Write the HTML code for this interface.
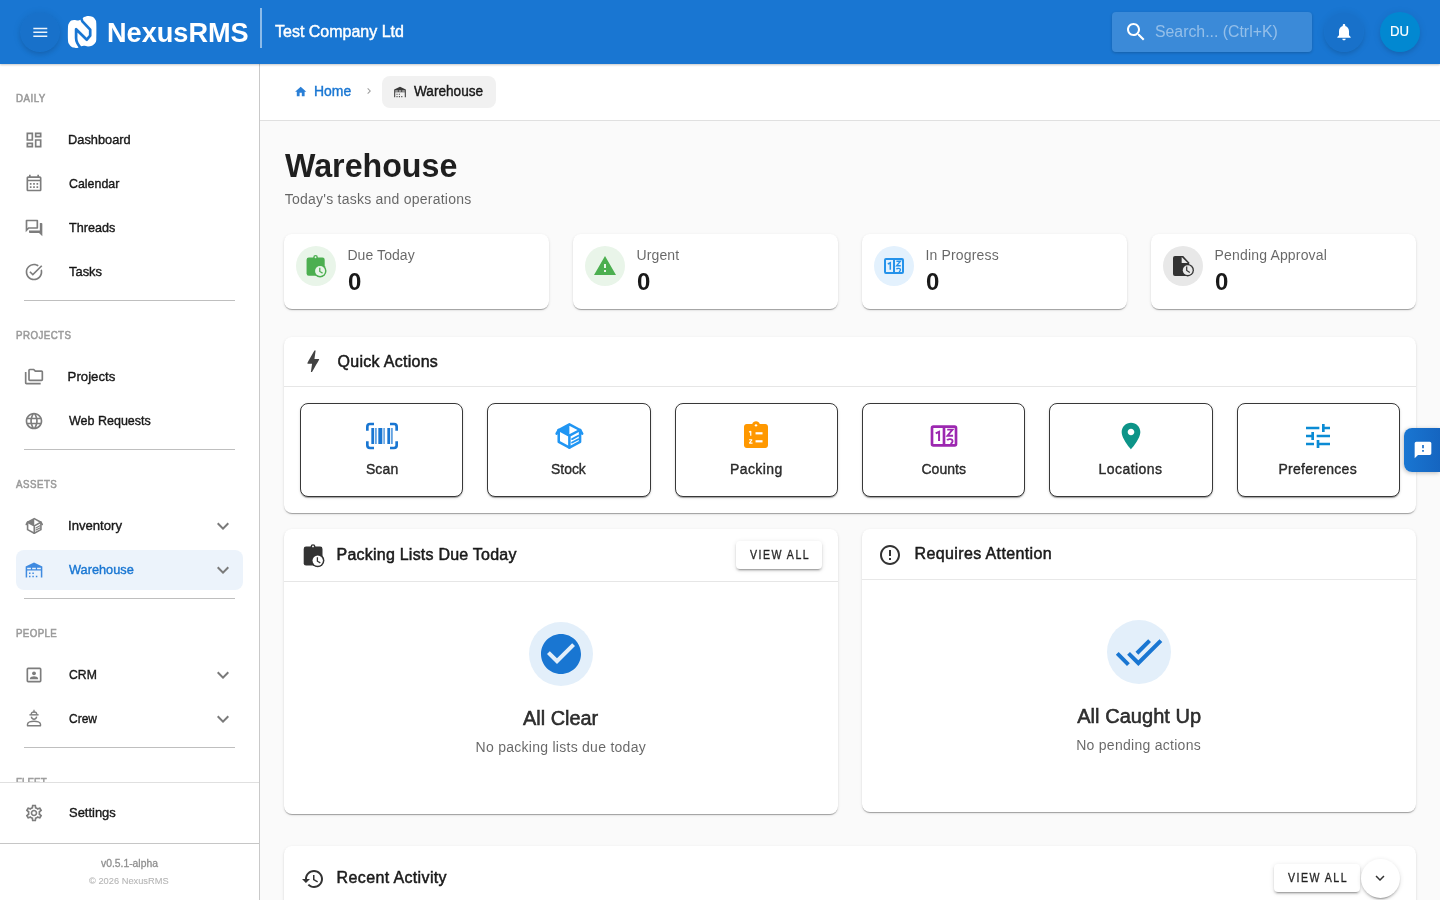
<!DOCTYPE html>
<html lang="en"><head><meta charset="utf-8"><title>Warehouse - NexusRMS</title>
<style>
html,body{margin:0;padding:0;font-family:"Liberation Sans",sans-serif}
body{width:1440px;height:900px;overflow:hidden;position:relative;background:#fafafa;font-family:"Liberation Sans",sans-serif;}
.t{position:absolute;white-space:nowrap;line-height:1;transform-origin:0 0;font-family:"Liberation Sans",sans-serif;}
svg{display:block;overflow:visible}
</style></head><body>
<div id="app" style="position:absolute;left:0;top:0;width:1440px;height:900px;overflow:hidden;will-change:transform;">

<div id="sidebar" style="position:absolute;left:0;top:64px;width:259px;height:836px;background:#fff;border-right:1px solid #c9c9c9;">
</div>
<!-- sidebar nav -->
<div style="position:absolute;left:16px;top:550px;width:227px;height:39.6px;background:#ecf3fb;border-radius:8px;"></div>
<span class="t" style="left:16.40px;top:93px;font-size:10.8px;color:#9a9a9a;letter-spacing:0.533px;transform:scaleX(0.9000);-webkit-text-stroke:0.55px #9a9a9a;">DAILY</span>
<span class="t" style="left:16.40px;top:330px;font-size:10.8px;color:#9a9a9a;letter-spacing:0.500px;transform:scaleX(0.9000);-webkit-text-stroke:0.55px #9a9a9a;">PROJECTS</span>
<span class="t" style="left:16.40px;top:479px;font-size:10.8px;color:#9a9a9a;letter-spacing:0.542px;transform:scaleX(0.9000);-webkit-text-stroke:0.55px #9a9a9a;">ASSETS</span>
<span class="t" style="left:16.40px;top:628px;font-size:10.8px;color:#9a9a9a;letter-spacing:0.421px;transform:scaleX(0.9000);-webkit-text-stroke:0.55px #9a9a9a;">PEOPLE</span>
<div style="position:absolute;left:0;top:770px;width:259px;height:12px;overflow:hidden;">
<span class="t" style="left:16.40px;top:7px;font-size:10.8px;color:#9a9a9a;letter-spacing:0.110px;transform:scaleX(0.9000);-webkit-text-stroke:0.55px #9a9a9a;">FLEET</span>
</div>
<div style="position:absolute;left:24px;top:300px;width:211px;height:1px;background:#bfbfbf;"></div>
<div style="position:absolute;left:24px;top:449px;width:211px;height:1px;background:#bfbfbf;"></div>
<div style="position:absolute;left:24px;top:598px;width:211px;height:1px;background:#bfbfbf;"></div>
<div style="position:absolute;left:24px;top:747px;width:211px;height:1px;background:#bfbfbf;"></div>
<svg style="position:absolute;left:24px;top:129.5px;width:20px;height:20px;fill:#7d7d7d;" viewBox="0 0 24 24"><path d="M19 5v2h-4V5h4M9 5v6H5V5h4m10 8v6h-4v-6h4M9 17v2H5v-2h4M21 3h-8v6h8V3zM11 3H3v10h8V3zm10 8h-8v10h8V11zm-10 4H3v6h8v-6z"/></svg>
<svg style="position:absolute;left:24px;top:172.9px;width:20px;height:20px;fill:#7d7d7d;" viewBox="0 0 24 24"><path d="M19 4h-1V2h-2v2H8V2H6v2H5c-1.11 0-1.99.9-1.99 2L3 20c0 1.1.89 2 2 2h14c1.1 0 2-.9 2-2V6c0-1.1-.9-2-2-2zm0 16H5V10h14v10zm0-12H5V6h14v2zM9 14H7v-2h2v2zm4 0h-2v-2h2v2zm4 0h-2v-2h2v2zm-8 4H7v-2h2v2zm4 0h-2v-2h2v2zm4 0h-2v-2h2v2z"/></svg>
<svg style="position:absolute;left:24px;top:217.6px;width:20px;height:20px;fill:#7d7d7d;" viewBox="0 0 24 24"><path d="M15 4v7H5.17L4 12.17V4h11m1-2H3c-.55 0-1 .45-1 1v14l4-4h10c.55 0 1-.45 1-1V3c0-.55-.45-1-1-1zm5 4h-2v9H6v2c0 .55.45 1 1 1h11l4 4V7c0-.55-.45-1-1-1z"/></svg>
<svg style="position:absolute;left:24px;top:261.6px;width:20px;height:20px;fill:#7d7d7d;" viewBox="0 0 24 24"><path d="M22 5.18 10.59 16.6l-4.24-4.24 1.41-1.41 2.83 2.83 10-10L22 5.18zm-2.21 5.04c.13.57.21 1.17.21 1.78 0 4.42-3.58 8-8 8s-8-3.58-8-8 3.58-8 8-8c1.58 0 3.04.46 4.28 1.25l1.44-1.44C16.1 2.67 14.13 2 12 2 6.48 2 2 6.48 2 12s4.48 10 10 10 10-4.48 10-10c0-1.19-.22-2.33-.6-3.39l-1.61 1.61z"/></svg>
<svg style="position:absolute;left:24px;top:366.5px;width:20px;height:20px;fill:#7d7d7d;" viewBox="0 0 24 24"><path d="M3 19h17v2H3c-1.1 0-2-.9-2-2V6h2v13zM23 6v9c0 1.1-.9 2-2 2H7c-1.1 0-2-.9-2-2l.01-11c0-1.1.89-2 1.99-2h5l2 2h7c1.1 0 2 .9 2 2zM7 15h14V6h-7.83l-2-2H7v11z"/></svg>
<svg style="position:absolute;left:24px;top:410.5px;width:20px;height:20px;fill:#7d7d7d;" viewBox="0 0 24 24"><path d="M11.99 2C6.47 2 2 6.48 2 12s4.47 10 9.99 10C17.52 22 22 17.52 22 12S17.52 2 11.99 2zm6.93 6h-2.95c-.32-1.25-.78-2.45-1.38-3.56 1.84.63 3.37 1.91 4.33 3.56zM12 4.04c.83 1.2 1.48 2.53 1.91 3.96h-3.82c.43-1.43 1.08-2.76 1.91-3.96zM4.26 14C4.1 13.36 4 12.69 4 12s.1-1.36.26-2h3.38c-.08.66-.14 1.32-.14 2 0 .68.06 1.34.14 2H4.26zm.82 2h2.95c.32 1.25.78 2.45 1.38 3.56-1.84-.63-3.37-1.9-4.33-3.56zm2.95-8H5.08c.96-1.66 2.49-2.93 4.33-3.56C8.81 5.55 8.35 6.75 8.03 8zM12 19.96c-.83-1.2-1.48-2.53-1.91-3.96h3.82c-.43 1.43-1.08 2.76-1.91 3.96zM14.34 14H9.66c-.09-.66-.16-1.32-.16-2 0-.68.07-1.35.16-2h4.68c.09.65.16 1.32.16 2 0 .68-.07 1.34-.16 2zm.25 5.56c.6-1.11 1.06-2.31 1.38-3.56h2.95c-.96 1.65-2.49 2.93-4.33 3.56zM16.36 14c.08-.66.14-1.32.14-2 0-.68-.06-1.34-.14-2h3.38c.16.64.26 1.31.26 2s-.1 1.36-.26 2h-3.38z"/></svg>
<svg style="position:absolute;left:24px;top:515.5px;width:20px;height:20px;" viewBox="0 0 24 24"><g fill="none" stroke="#7d7d7d" stroke-width="1.9" stroke-linejoin="round" stroke-linecap="round"><path d="M12.3 3.2 20.3 7.5v8.9l-8 4.3-8-4.3V7.5z"/><path d="M4.3 7.5 12.3 11.8 20.3 7.5M12.3 11.8v8.9"/><path d="M4.3 7.5 2.7 10.2M20.3 7.5 21.9 10.2"/><path d="M14.3 14.3 19 11.8M14.3 16.9 19 14.4" stroke-width="1.4"/></g><path d="M12.3 3.2 4.3 7.5 12.3 11.8z" fill="#7d7d7d"/></svg>
<svg style="position:absolute;left:24px;top:559.5px;width:20px;height:20px;" viewBox="0 0 24 24"><path fill="#3f8ae0" fill-rule="evenodd" d="M12 3 22 7.8V21H20.2V12.6H3.8V21H2V7.8zM3.8 9.3V11H8.3V9.3zM9.8 9.3V11H14.2V9.3zM15.7 9.3V11H20.2V9.3z"/><path fill="#3f8ae0" d="M6 15h1.8v1.8H6zM10 15h1.8v1.8H10zM6 19h1.8v1.8H6zM10 19h1.8v1.8H10zM14.2 19h1.8v1.8H14.2z"/></svg>
<svg style="position:absolute;left:24px;top:664.5px;width:20px;height:20px;" viewBox="0 0 24 24"><path fill="#7d7d7d" fill-rule="evenodd" d="M5 3h14a2 2 0 0 1 2 2v14a2 2 0 0 1-2 2H5a2 2 0 0 1-2-2V5a2 2 0 0 1 2-2zm0 2v14h14V5z"/><circle cx="12" cy="10" r="2.3" fill="#7d7d7d"/><path fill="#7d7d7d" d="M7 17v-.6c0-1.9 3.3-2.9 5-2.9s5 1 5 2.9v.6z"/></svg>
<svg style="position:absolute;left:24px;top:708.4px;width:20px;height:20px;" viewBox="0 0 24 24"><g fill="none" stroke="#7d7d7d" stroke-width="1.7" stroke-linecap="butt"><path d="M6.5 8.2H17.5"/><path d="M8.6 8C8.6 5.6 10 4.6 12 4.6S15.4 5.6 15.4 8" stroke-width="1.5"/><path d="M12 2.2V6" stroke-width="1.5"/><path d="M8.8 10.3C9.2 12.4 10.4 13.4 12 13.4S14.8 12.4 15.2 10.3"/><path d="M4.2 21.2V19.6C4.2 17 8.6 15.8 12 15.8S19.8 17 19.8 19.6V21.2z" stroke-linejoin="round"/></g></svg>
<svg style="position:absolute;left:211px;top:514px;width:24px;height:24px;fill:#7a7a7a;" viewBox="0 0 24 24"><path d="M16.59 8.59 12 13.17 7.41 8.59 6 10l6 6 6-6z"/></svg>
<svg style="position:absolute;left:211px;top:558px;width:24px;height:24px;fill:#7a7a7a;" viewBox="0 0 24 24"><path d="M16.59 8.59 12 13.17 7.41 8.59 6 10l6 6 6-6z"/></svg>
<svg style="position:absolute;left:211px;top:663px;width:24px;height:24px;fill:#7a7a7a;" viewBox="0 0 24 24"><path d="M16.59 8.59 12 13.17 7.41 8.59 6 10l6 6 6-6z"/></svg>
<svg style="position:absolute;left:211px;top:707px;width:24px;height:24px;fill:#7a7a7a;" viewBox="0 0 24 24"><path d="M16.59 8.59 12 13.17 7.41 8.59 6 10l6 6 6-6z"/></svg>
<span class="t" style="left:67.63px;top:133px;font-size:13.2px;color:rgba(0,0,0,0.87);transform:scaleX(0.9718);-webkit-text-stroke:0.4px rgba(0,0,0,0.87);">Dashboard</span>
<span class="t" style="left:68.60px;top:177px;font-size:13.2px;color:rgba(0,0,0,0.87);transform:scaleX(0.9404);-webkit-text-stroke:0.4px rgba(0,0,0,0.87);">Calendar</span>
<span class="t" style="left:68.60px;top:221px;font-size:13.2px;color:rgba(0,0,0,0.87);transform:scaleX(0.9563);-webkit-text-stroke:0.4px rgba(0,0,0,0.87);">Threads</span>
<span class="t" style="left:68.60px;top:265px;font-size:13.2px;color:rgba(0,0,0,0.87);transform:scaleX(0.9791);-webkit-text-stroke:0.4px rgba(0,0,0,0.87);">Tasks</span>
<span class="t" style="left:67.60px;top:370px;font-size:13.2px;color:rgba(0,0,0,0.87);letter-spacing:0.015px;-webkit-text-stroke:0.4px rgba(0,0,0,0.87);">Projects</span>
<span class="t" style="left:68.60px;top:414px;font-size:13.2px;color:rgba(0,0,0,0.87);transform:scaleX(0.9480);-webkit-text-stroke:0.4px rgba(0,0,0,0.87);">Web Requests</span>
<span class="t" style="left:67.60px;top:519px;font-size:13.2px;color:rgba(0,0,0,0.87);transform:scaleX(0.9953);-webkit-text-stroke:0.4px rgba(0,0,0,0.87);">Inventory</span>
<span class="t" style="left:68.60px;top:563px;font-size:13.2px;color:#1976d2;transform:scaleX(0.9668);-webkit-text-stroke:0.4px #1976d2;">Warehouse</span>
<span class="t" style="left:68.60px;top:668px;font-size:13.2px;color:rgba(0,0,0,0.87);transform:scaleX(0.9261);-webkit-text-stroke:0.4px rgba(0,0,0,0.87);">CRM</span>
<span class="t" style="left:68.60px;top:712px;font-size:13.2px;color:rgba(0,0,0,0.87);transform:scaleX(0.9088);-webkit-text-stroke:0.4px rgba(0,0,0,0.87);">Crew</span>
<div style="position:absolute;left:0px;top:782px;width:259px;height:61px;background:#fff;border-top:1px solid #e0e0e0;box-sizing:border-box;"></div>
<svg style="position:absolute;left:24px;top:802.9px;width:20px;height:20px;fill:#7d7d7d;" viewBox="0 0 24 24"><path d="M19.43 12.98c.04-.32.07-.64.07-.98 0-.34-.03-.66-.07-.98l2.11-1.65c.19-.15.24-.42.12-.64l-2-3.46c-.09-.16-.26-.25-.44-.25-.06 0-.12.01-.17.03l-2.49 1c-.52-.4-1.08-.73-1.69-.98l-.38-2.65C14.46 2.18 14.25 2 14 2h-4c-.25 0-.46.18-.49.42l-.38 2.65c-.61.25-1.17.59-1.69.98l-2.49-1c-.06-.02-.12-.03-.18-.03-.17 0-.34.09-.43.25l-2 3.46c-.13.22-.07.49.12.64l2.11 1.65c-.04.32-.07.65-.07.98 0 .33.03.66.07.98l-2.11 1.65c-.19.15-.24.42-.12.64l2 3.46c.09.16.26.25.44.25.06 0 .12-.01.17-.03l2.49-1c.52.4 1.08.73 1.69.98l.38 2.65c.03.24.24.42.49.42h4c.25 0 .46-.18.49-.42l.38-2.65c.61-.25 1.17-.59 1.69-.98l2.49 1c.06.02.12.03.18.03.17 0 .34-.09.43-.25l2-3.46c.12-.22.07-.49-.12-.64l-2.11-1.65zm-1.98-1.71c.04.31.05.52.05.73 0 .21-.02.43-.05.73l-.14 1.13.89.7 1.08.84-.7 1.21-1.27-.51-1.04-.42-.9.68c-.43.32-.84.56-1.25.73l-1.06.43-.16 1.13-.2 1.35h-1.4l-.19-1.35-.16-1.13-1.06-.43c-.43-.18-.83-.41-1.23-.71l-.91-.7-1.06.43-1.27.51-.7-1.21 1.08-.84.89-.7-.14-1.13c-.03-.31-.05-.54-.05-.74s.02-.43.05-.73l.14-1.13-.89-.7-1.08-.84.7-1.21 1.27.51 1.04.42.9-.68c.43-.32.84-.56 1.25-.73l1.06-.43.16-1.13.2-1.35h1.39l.19 1.35.16 1.13 1.06.43c.43.18.83.41 1.23.71l.91.7 1.06-.43 1.27-.51.7 1.21-1.07.85-.89.7.14 1.13zM12 8c-2.21 0-4 1.79-4 4s1.79 4 4 4 4-1.79 4-4-1.79-4-4-4zm0 6c-1.1 0-2-.9-2-2s.9-2 2-2 2 .9 2 2-.9 2-2 2z"/></svg>
<span class="t" style="left:68.60px;top:806px;font-size:13.2px;color:rgba(0,0,0,0.87);transform:scaleX(0.9811);-webkit-text-stroke:0.4px rgba(0,0,0,0.87);">Settings</span>
<div style="position:absolute;left:0px;top:843px;width:259px;height:57px;background:#fff;border-top:1px solid #c6c6c6;box-sizing:border-box;"></div>
<span class="t" style="left:100.90px;top:859px;font-size:10.4px;color:#8f8f8f;transform:scaleX(0.9946);-webkit-text-stroke:0.3px #8f8f8f;">v0.5.1-alpha</span>
<span class="t" style="left:89.40px;top:876px;font-size:9.8px;color:#b5b5b5;transform:scaleX(0.9484);-webkit-text-stroke:0.1px #b5b5b5;">© 2026 NexusRMS</span>
<div style="position:absolute;left:260px;top:64px;width:1180px;height:56px;background:#fff;border-bottom:1px solid #e0e0e0;"></div>
<svg style="position:absolute;left:294.0px;top:85px;width:13.4px;height:13.4px;fill:#2a7fd6;" viewBox="0 0 24 24"><path d="M10 20v-6h4v6h5v-8h3L12 3 2 12h3v8z"/></svg>
<span class="t" style="left:313.60px;top:84px;font-size:14px;color:#1976d2;transform:scaleX(0.9957);-webkit-text-stroke:0.4px #1976d2;">Home</span>
<svg style="position:absolute;left:363.2px;top:85.2px;width:12px;height:12px;fill:#9e9e9e;" viewBox="0 0 24 24"><path d="M10 6 8.59 7.41 13.17 12l-4.58 4.59L10 18l6-6z"/></svg>
<div style="position:absolute;left:382px;top:76px;width:114px;height:32px;background:#f1f1f1;border-radius:8px;"></div>
<svg style="position:absolute;left:393.4px;top:84.8px;width:14px;height:14px;" viewBox="0 0 24 24"><path fill="#3a3a3a" fill-rule="evenodd" d="M12 3 22 7.8V21H20.2V12.6H3.8V21H2V7.8zM3.8 9.3V11H8.3V9.3zM9.8 9.3V11H14.2V9.3zM15.7 9.3V11H20.2V9.3z"/><path fill="#3a3a3a" d="M6 15h1.8v1.8H6zM10 15h1.8v1.8H10zM6 19h1.8v1.8H6zM10 19h1.8v1.8H10zM14.2 19h1.8v1.8H14.2z"/></svg>
<span class="t" style="left:285.20px;top:148px;font-size:34px;color:rgba(0,0,0,0.88);transform:scaleX(0.9470);font-weight:700;">Warehouse</span>
<div style="position:absolute;left:0;top:0;width:1440px;height:64px;background:#1976d2;box-shadow:0 1px 2px rgba(0,0,0,.22);"></div>
<div style="position:absolute;left:20px;top:12px;width:40px;height:40px;border-radius:50%;background:rgba(0,0,0,0.035);box-shadow:0 3px 5px -1px rgba(0,0,0,.12),0 1px 8px 0 rgba(0,0,0,.08);"></div>
<svg style="position:absolute;left:30.7px;top:22.7px;width:18.6px;height:18.6px;fill:rgba(255,255,255,0.92);" viewBox="0 0 24 24"><path d="M3 18h18v-2H3v2zm0-5h18v-2H3v2zm0-7v2h18V6H3z"/></svg>
<svg style="position:absolute;left:68px;top:16px;width:28.3px;height:32px" viewBox="0 0 28.3 32"><path d="M6.10 3.90C7.28 3.87 9.15 4.55 10.40 4.40C11.65 4.25 12.65 3.55 13.60 3.00C14.55 2.45 15.03 1.60 16.10 1.10C17.17 0.60 18.62 0.05 20.00 0.00C21.38 -0.05 23.15 0.15 24.40 0.80C25.65 1.45 26.85 2.78 27.50 3.90C28.15 5.02 28.17 4.30 28.30 7.50C28.43 10.70 28.48 19.87 28.30 23.10C28.12 26.33 27.93 25.80 27.20 26.90C26.47 28.00 25.10 29.12 23.90 29.70C22.70 30.28 21.38 30.40 20.00 30.40C18.62 30.40 16.98 29.63 15.60 29.70C14.22 29.77 12.63 30.47 11.70 30.80C10.77 31.13 10.65 31.50 10.00 31.70C9.35 31.90 8.82 32.10 7.80 32.00C6.78 31.90 5.02 31.77 3.90 31.10C2.78 30.43 1.75 29.15 1.10 28.00C0.45 26.85 0.18 27.07 0.00 24.20C-0.18 21.33 -0.18 13.68 0.00 10.80C0.18 7.92 0.55 7.93 1.10 6.90C1.65 5.87 2.47 5.10 3.30 4.60C4.13 4.10 4.92 3.93 6.10 3.90Z" fill="#fff"/><path d="M13.0 1.8 14.4 5.3 22.2 13.7V19.6L18.8 23.7 8.1 13.2V21.9C8.1 24 8.6 25.6 9.3 27 10 28.5 11 29.8 12.4 31.6" fill="none" stroke="#1976d2" stroke-width="2.7" stroke-linejoin="round" stroke-linecap="butt"/></svg>
<span class="t" style="left:107.23px;top:19px;font-size:28px;color:#fff;transform:scaleX(0.9683);font-weight:700;">NexusRMS</span>
<div style="position:absolute;left:260px;top:8px;width:2px;height:40px;background:rgba(255,255,255,0.5);"></div>
<span class="t" style="left:274.60px;top:23px;font-size:16.4px;color:#fff;transform:scaleX(0.9759);-webkit-text-stroke:0.45px #fff;">Test Company Ltd</span>
<div style="position:absolute;left:1112px;top:12px;width:200px;height:40px;background:rgba(255,255,255,0.15);border-radius:4px;box-shadow:0 1px 3px rgba(0,0,0,.2);"></div>
<svg style="position:absolute;left:1124px;top:20px;width:24px;height:24px;fill:#fff;" viewBox="0 0 24 24"><path d="M15.5 14h-.79l-.28-.27C15.41 12.59 16 11.11 16 9.5 16 5.91 13.09 3 9.5 3S3 5.91 3 9.5 5.91 16 9.5 16c1.61 0 3.09-.59 4.23-1.57l.27.28v.79l5 4.99L20.49 19l-4.99-5zm-6 0C7.01 14 5 11.99 5 9.5S7.01 5 9.5 5 14 7.01 14 9.5 11.99 14 9.5 14z"/></svg>
<span class="t" style="left:1154.60px;top:24px;font-size:16px;color:rgba(255,255,255,0.45);transform:scaleX(0.9895);">Search... (Ctrl+K)</span>
<div style="position:absolute;left:1324px;top:12px;width:40px;height:40px;border-radius:50%;background:rgba(0,0,0,0.035);box-shadow:0 3px 5px -1px rgba(0,0,0,.12),0 1px 8px 0 rgba(0,0,0,.08);"></div>
<svg style="position:absolute;left:1334px;top:22px;width:20px;height:20px;fill:#fff;" viewBox="0 0 24 24"><path d="M12 22c1.1 0 2-.9 2-2h-4c0 1.1.89 2 2 2zm6-6v-5c0-3.07-1.64-5.64-4.5-6.32V4c0-.83-.67-1.5-1.5-1.5s-1.5.67-1.5 1.5v.68C7.63 5.36 6 7.92 6 11v5l-2 2v1h16v-1l-2-2z"/></svg>
<div style="position:absolute;left:1380px;top:12px;width:40px;height:40px;border-radius:50%;background:#0288d1;box-shadow:0 3px 5px -1px rgba(0,0,0,.12),0 1px 8px 0 rgba(0,0,0,.08);"></div>
<span class="t" style="left:1390.26px;top:24px;font-size:14px;color:#fff;transform:scaleX(0.9419);-webkit-text-stroke:0.2px #fff;">DU</span>
<span class="t" style="left:413.90px;top:84px;font-size:14px;color:rgba(0,0,0,0.87);transform:scaleX(0.9721);-webkit-text-stroke:0.4px rgba(0,0,0,0.87);">Warehouse</span>
<span class="t" style="left:284.70px;top:192px;font-size:14px;color:rgba(0,0,0,0.6);letter-spacing:0.237px;">Today&#x27;s tasks and operations</span>
<div style="position:absolute;left:284px;top:234px;width:265px;height:75px;background:#fff;border-radius:8px;box-shadow:0 2px 1px -1px rgba(0,0,0,.2),0 1px 1px 0 rgba(0,0,0,.14),0 1px 3px 0 rgba(0,0,0,.12);"></div>
<div style="position:absolute;left:296px;top:246px;width:40px;height:40px;border-radius:50%;background:#e9f5e9;"></div>
<svg style="position:absolute;left:303.2px;top:252.6px;width:27px;height:27px;" viewBox="0 0 28 28"><rect x="3.7" y="4.6" width="18.8" height="18.9" rx="2.3" fill="#4caf50"/><circle cx="13" cy="4.6" r="2.4" fill="#4caf50"/><circle cx="13" cy="4.4" r="0.95" fill="#e9f5e9"/><circle cx="17.7" cy="18.6" r="6.7" fill="#4caf50"/><circle cx="17.7" cy="18.6" r="5.2" fill="#e9f5e9"/><path d="M17.4 15.2V19.2L20.3 20.9" fill="none" stroke="#4caf50" stroke-width="1.3"/></svg>
<span class="t" style="left:347.40px;top:248px;font-size:14px;color:rgba(0,0,0,0.6);letter-spacing:0.084px;">Due Today</span>
<span class="t" style="left:347.90px;top:270px;font-size:24px;color:rgba(0,0,0,0.9);font-weight:700;">0</span>
<div style="position:absolute;left:573px;top:234px;width:265px;height:75px;background:#fff;border-radius:8px;box-shadow:0 2px 1px -1px rgba(0,0,0,.2),0 1px 1px 0 rgba(0,0,0,.14),0 1px 3px 0 rgba(0,0,0,.12);"></div>
<div style="position:absolute;left:585px;top:246px;width:40px;height:40px;border-radius:50%;background:#e9f5e9;"></div>
<svg style="position:absolute;left:593px;top:254px;width:24px;height:24px;fill:#4caf50;" viewBox="0 0 24 24"><path d="M1 21h22L12 2 1 21zm12-3h-2v-2h2v2zm0-4h-2v-4h2v4z"/></svg>
<span class="t" style="left:636.60px;top:248px;font-size:14px;color:rgba(0,0,0,0.6);letter-spacing:0.094px;">Urgent</span>
<span class="t" style="left:637.00px;top:270px;font-size:24px;color:rgba(0,0,0,0.9);font-weight:700;">0</span>
<div style="position:absolute;left:862px;top:234px;width:265px;height:75px;background:#fff;border-radius:8px;box-shadow:0 2px 1px -1px rgba(0,0,0,.2),0 1px 1px 0 rgba(0,0,0,.14),0 1px 3px 0 rgba(0,0,0,.12);"></div>
<div style="position:absolute;left:874px;top:246px;width:40px;height:40px;border-radius:50%;background:#e3f1fd;"></div>
<svg style="position:absolute;left:882px;top:254px;width:24px;height:24px;" viewBox="0 0 24 24"><path fill="#2492ea" fill-rule="evenodd" d="M4 4h16a2 2 0 0 1 2 2v12a2 2 0 0 1-2 2H4a2 2 0 0 1-2-2V6a2 2 0 0 1 2-2zm0 2v12h7V6zm9 0v12h7V6z"/><g fill="none" stroke="#2492ea" stroke-width="1.5" stroke-linejoin="miter"><path d="M5.8 10 8.3 8.8V15.8"/><path d="M14.4 7.2H18.4L14.6 11.8H18.8" stroke-width="1.4"/><path d="M14.4 15.2C15 14 18.6 13.9 18.4 16 18.3 17 17.6 17.4 17 18" stroke-width="1.4"/></g></svg>
<span class="t" style="left:925.40px;top:248px;font-size:14px;color:rgba(0,0,0,0.6);letter-spacing:0.171px;">In Progress</span>
<span class="t" style="left:926.00px;top:270px;font-size:24px;color:rgba(0,0,0,0.9);font-weight:700;">0</span>
<div style="position:absolute;left:1151px;top:234px;width:265px;height:75px;background:#fff;border-radius:8px;box-shadow:0 2px 1px -1px rgba(0,0,0,.2),0 1px 1px 0 rgba(0,0,0,.14),0 1px 3px 0 rgba(0,0,0,.12);"></div>
<div style="position:absolute;left:1163px;top:246px;width:40px;height:40px;border-radius:50%;background:#e8e8e8;"></div>
<svg style="position:absolute;left:1171px;top:254px;width:24px;height:24px;" viewBox="0 0 24 24"><path fill="#333" d="M4 2h8.2L18.2 8.4V20a2 2 0 0 1-2 2H4a2 2 0 0 1-2-2V4a2 2 0 0 1 2-2z"/><path fill="#e8e8e8" d="M10.7 3.1V9.1H16.7z"/><circle cx="16.7" cy="16.2" r="6.2" fill="#333"/><circle cx="16.7" cy="16.2" r="4.9" fill="#e8e8e8"/><path d="M15.7 12.4V16.5L18.8 18.4" fill="none" stroke="#333" stroke-width="1.2"/></svg>
<span class="t" style="left:1214.60px;top:248px;font-size:14px;color:rgba(0,0,0,0.6);letter-spacing:0.166px;">Pending Approval</span>
<span class="t" style="left:1214.90px;top:270px;font-size:24px;color:rgba(0,0,0,0.9);font-weight:700;">0</span>
<div style="position:absolute;left:284px;top:337px;width:1132px;height:176px;background:#fff;border-radius:8px;box-shadow:0 2px 1px -1px rgba(0,0,0,.2),0 1px 1px 0 rgba(0,0,0,.14),0 1px 3px 0 rgba(0,0,0,.12);"></div>
<div style="position:absolute;left:284px;top:386px;width:1132px;height:1px;background:#e6e6e6;"></div>
<svg style="position:absolute;left:298.5px;top:347.4px;width:28.5px;height:28.5px;fill:#424242;" viewBox="0 0 24 24"><path d="M11 21h-1l1-7H7.5c-.58 0-.57-.32-.38-.66.19-.34.05-.08.07-.12C8.48 10.94 10.42 7.54 13 3h1l-1 7h3.5c.49 0 .56.33.47.51l-.07.15C12.96 17.55 11 21 11 21z"/></svg>
<span class="t" style="left:337.60px;top:354px;font-size:16px;color:rgba(0,0,0,0.87);letter-spacing:0.274px;-webkit-text-stroke:0.5px rgba(0,0,0,0.87);">Quick Actions</span>
<div style="position:absolute;left:300.0px;top:403px;width:163.33px;height:94px;box-sizing:border-box;border:1px solid #383838;border-radius:8px;background:#fff;box-shadow:0 2px 1px -1px rgba(0,0,0,.2),0 1px 1px 0 rgba(0,0,0,.14),0 1px 3px 0 rgba(0,0,0,.12);"></div>
<svg style="position:absolute;left:365.67px;top:420px;width:32px;height:32px;" viewBox="0 0 24 24"><g fill="none" stroke="#1976d2" stroke-width="2" stroke-linejoin="round" stroke-linecap="butt"><path d="M1 8V5Q1 3 3 3H6M18 3H21Q23 3 23 5V8M23 16V19Q23 21 21 21H18M6 21H3Q1 21 1 19V16"/></g><g fill="#1976d2"><rect x="4" y="6" width="2.1" height="12"/><rect x="7" y="6" width="0.9" height="12"/><rect x="9.25" y="6" width="3" height="12"/><rect x="13.15" y="6" width="0.8" height="12"/><rect x="16" y="6" width="2.1" height="12"/><rect x="19" y="6" width="0.9" height="12"/></g></svg>
<span class="t" style="left:365.90px;top:462px;font-size:14px;color:rgba(0,0,0,0.8);letter-spacing:0.125px;-webkit-text-stroke:0.4px rgba(0,0,0,0.8);">Scan</span>
<div style="position:absolute;left:487.33px;top:403px;width:163.33px;height:94px;box-sizing:border-box;border:1px solid #383838;border-radius:8px;background:#fff;box-shadow:0 2px 1px -1px rgba(0,0,0,.2),0 1px 1px 0 rgba(0,0,0,.14),0 1px 3px 0 rgba(0,0,0,.12);"></div>
<svg style="position:absolute;left:553.0px;top:420px;width:32px;height:32px;" viewBox="0 0 24 24"><g fill="none" stroke="#2196f3" stroke-width="1.9" stroke-linejoin="round" stroke-linecap="round"><path d="M12.3 3.2 20.3 7.5v8.9l-8 4.3-8-4.3V7.5z"/><path d="M4.3 7.5 12.3 11.8 20.3 7.5M12.3 11.8v8.9"/><path d="M4.3 7.5 2.7 10.2M20.3 7.5 21.9 10.2"/><path d="M14.3 14.3 19 11.8M14.3 16.9 19 14.4" stroke-width="1.4"/></g><path d="M12.3 3.2 4.3 7.5 12.3 11.8z" fill="#2196f3"/></svg>
<span class="t" style="left:550.90px;top:462px;font-size:14px;color:rgba(0,0,0,0.8);transform:scaleX(0.9941);-webkit-text-stroke:0.4px rgba(0,0,0,0.8);">Stock</span>
<div style="position:absolute;left:674.67px;top:403px;width:163.33px;height:94px;box-sizing:border-box;border:1px solid #383838;border-radius:8px;background:#fff;box-shadow:0 2px 1px -1px rgba(0,0,0,.2),0 1px 1px 0 rgba(0,0,0,.14),0 1px 3px 0 rgba(0,0,0,.12);"></div>
<svg style="position:absolute;left:740.33px;top:420px;width:32px;height:32px;" viewBox="0 0 24 24"><path fill="#ff9800" d="M19 3h-4.18C14.4 1.84 13.3 1 12 1s-2.4.84-2.82 2H5c-1.1 0-2 .9-2 2v14c0 1.1.9 2 2 2h14c1.1 0 2-.9 2-2V5c0-1.1-.9-2-2-2z"/><circle cx="12" cy="4" r="0.9" fill="#fff"/><rect x="11.65" y="9.15" width="5.25" height="1.65" fill="#fff"/><rect x="11.65" y="15.15" width="5.25" height="1.65" fill="#fff"/><path d="M6.8 9.1 8.05 8.4V11.85" fill="none" stroke="#fff" stroke-width="0.95" stroke-linejoin="bevel"/><path d="M6.8 14.8H9L7 17.3H9.4" fill="none" stroke="#fff" stroke-width="0.85" stroke-linejoin="bevel"/></svg>
<span class="t" style="left:729.90px;top:462px;font-size:14px;color:rgba(0,0,0,0.8);letter-spacing:0.447px;-webkit-text-stroke:0.4px rgba(0,0,0,0.8);">Packing</span>
<div style="position:absolute;left:862.0px;top:403px;width:163.33px;height:94px;box-sizing:border-box;border:1px solid #383838;border-radius:8px;background:#fff;box-shadow:0 2px 1px -1px rgba(0,0,0,.2),0 1px 1px 0 rgba(0,0,0,.14),0 1px 3px 0 rgba(0,0,0,.12);"></div>
<svg style="position:absolute;left:927.66px;top:420px;width:32px;height:32px;" viewBox="0 0 24 24"><path fill="#9c27b0" fill-rule="evenodd" d="M4 4h16a2 2 0 0 1 2 2v12a2 2 0 0 1-2 2H4a2 2 0 0 1-2-2V6a2 2 0 0 1 2-2zm0 2v12h7V6zm9 0v12h7V6z"/><g fill="none" stroke="#9c27b0" stroke-width="1.5" stroke-linejoin="miter"><path d="M5.8 10 8.3 8.8V15.8"/><path d="M14.4 7.2H18.4L14.6 11.8H18.8" stroke-width="1.4"/><path d="M14.4 15.2C15 14 18.6 13.9 18.4 16 18.3 17 17.6 17.4 17 18" stroke-width="1.4"/></g></svg>
<span class="t" style="left:921.40px;top:462px;font-size:14px;color:rgba(0,0,0,0.8);letter-spacing:0.048px;-webkit-text-stroke:0.4px rgba(0,0,0,0.8);">Counts</span>
<div style="position:absolute;left:1049.33px;top:403px;width:163.33px;height:94px;box-sizing:border-box;border:1px solid #383838;border-radius:8px;background:#fff;box-shadow:0 2px 1px -1px rgba(0,0,0,.2),0 1px 1px 0 rgba(0,0,0,.14),0 1px 3px 0 rgba(0,0,0,.12);"></div>
<svg style="position:absolute;left:1115.0px;top:420px;width:32px;height:32px;fill:#0d9488;" viewBox="0 0 24 24"><path d="M12 2C8.13 2 5 5.13 5 9c0 5.25 7 13 7 13s7-7.75 7-13c0-3.87-3.13-7-7-7zm0 9.5c-1.38 0-2.5-1.12-2.5-2.5s1.12-2.5 2.5-2.5 2.5 1.12 2.5 2.5-1.12 2.5-2.5 2.5z"/></svg>
<span class="t" style="left:1098.60px;top:462px;font-size:14px;color:rgba(0,0,0,0.8);letter-spacing:0.434px;-webkit-text-stroke:0.4px rgba(0,0,0,0.8);">Locations</span>
<div style="position:absolute;left:1236.66px;top:403px;width:163.33px;height:94px;box-sizing:border-box;border:1px solid #383838;border-radius:8px;background:#fff;box-shadow:0 2px 1px -1px rgba(0,0,0,.2),0 1px 1px 0 rgba(0,0,0,.14),0 1px 3px 0 rgba(0,0,0,.12);"></div>
<svg style="position:absolute;left:1302.33px;top:420px;width:32px;height:32px;fill:#0b8bd4;" viewBox="0 0 24 24"><path d="M3 17v2h6v-2H3zM3 5v2h10V5H3zm10 16v-2h8v-2h-8v-2h-2v6h2zM7 9v2H3v2h4v2h2V9H7zm14 4v-2H11v2h10zm-6-4h2V7h4V5h-4V3h-2v6z"/></svg>
<span class="t" style="left:1278.40px;top:462px;font-size:14px;color:rgba(0,0,0,0.8);letter-spacing:0.282px;-webkit-text-stroke:0.4px rgba(0,0,0,0.8);">Preferences</span>
<div style="position:absolute;left:1404px;top:428px;width:36px;height:44px;background:linear-gradient(90deg,#1976d2,#1565c0);border-radius:8px 0 0 8px;box-shadow:-1px 1px 4px rgba(0,0,0,.25);"></div>
<svg style="position:absolute;left:1412.5px;top:440px;width:20px;height:20px;fill:#fff;" viewBox="0 0 24 24"><path d="M20 2H4c-1.1 0-1.99.9-1.99 2L2 22l4-4h14c1.1 0 2-.9 2-2V4c0-1.1-.9-2-2-2zm-7 12h-2v-2h2v2zm0-4h-2V6h2v4z"/></svg>
<div style="position:absolute;left:284px;top:529px;width:554px;height:285px;background:#fff;border-radius:8px;box-shadow:0 2px 1px -1px rgba(0,0,0,.2),0 1px 1px 0 rgba(0,0,0,.14),0 1px 3px 0 rgba(0,0,0,.12);"></div>
<div style="position:absolute;left:284px;top:581px;width:554px;height:1px;background:#e6e6e6;"></div>
<svg style="position:absolute;left:299.5px;top:541.5px;width:28px;height:28px;" viewBox="0 0 28 28"><rect x="3.7" y="4.6" width="18.8" height="18.9" rx="2.3" fill="#333"/><circle cx="13" cy="4.6" r="2.4" fill="#333"/><circle cx="13" cy="4.4" r="0.95" fill="#fff"/><circle cx="17.7" cy="18.6" r="6.7" fill="#333"/><circle cx="17.7" cy="18.6" r="5.2" fill="#fff"/><path d="M17.4 15.2V19.2L20.3 20.9" fill="none" stroke="#333" stroke-width="1.3"/></svg>
<span class="t" style="left:336.60px;top:547px;font-size:16px;color:rgba(0,0,0,0.87);letter-spacing:0.223px;-webkit-text-stroke:0.5px rgba(0,0,0,0.87);">Packing Lists Due Today</span>
<div style="position:absolute;left:736px;top:541px;width:86px;height:28px;background:#fff;border-radius:4px;box-shadow:0 3px 1px -2px rgba(0,0,0,.2),0 2px 2px 0 rgba(0,0,0,.14),0 1px 5px 0 rgba(0,0,0,.12);"></div>
<span class="t" style="left:749.50px;top:549px;font-size:12px;color:rgba(0,0,0,0.8);letter-spacing:1.705px;transform:scaleX(0.8800);-webkit-text-stroke:0.35px rgba(0,0,0,0.8);">VIEW ALL</span>
<div style="position:absolute;left:529px;top:622px;width:64px;height:64px;border-radius:50%;background:#e3effa;"></div>
<svg style="position:absolute;left:537px;top:630px;width:48px;height:48px;fill:#1976d2;" viewBox="0 0 24 24"><path d="M12 2C6.48 2 2 6.48 2 12s4.48 10 10 10 10-4.48 10-10S17.52 2 12 2zm-2 15-5-5 1.41-1.41L10 14.17l7.59-7.59L19 8l-9 9z"/></svg>
<span class="t" style="left:523.20px;top:708px;font-size:20px;color:rgba(0,0,0,0.8);transform:scaleX(0.9945);-webkit-text-stroke:0.55px rgba(0,0,0,0.8);">All Clear</span>
<span class="t" style="left:475.60px;top:740px;font-size:14px;color:rgba(0,0,0,0.6);letter-spacing:0.267px;">No packing lists due today</span>
<div style="position:absolute;left:862px;top:529px;width:554px;height:283px;background:#fff;border-radius:8px;box-shadow:0 2px 1px -1px rgba(0,0,0,.2),0 1px 1px 0 rgba(0,0,0,.14),0 1px 3px 0 rgba(0,0,0,.12);"></div>
<div style="position:absolute;left:862px;top:579px;width:554px;height:1px;background:#e8e8e8;"></div>
<svg style="position:absolute;left:878.4px;top:542.6px;width:24px;height:24px;fill:#333;" viewBox="0 0 24 24"><path d="M11 15h2v2h-2zm0-8h2v6h-2zm.99-5C6.47 2 2 6.48 2 12s4.47 10 9.99 10C17.52 22 22 17.52 22 12S17.52 2 11.99 2zM12 20c-4.42 0-8-3.58-8-8s3.58-8 8-8 8 3.58 8 8-3.58 8-8 8z"/></svg>
<span class="t" style="left:914.60px;top:546px;font-size:16px;color:rgba(0,0,0,0.87);letter-spacing:0.374px;-webkit-text-stroke:0.5px rgba(0,0,0,0.87);">Requires Attention</span>
<div style="position:absolute;left:1107px;top:620px;width:64px;height:64px;border-radius:50%;background:#e3effa;"></div>
<svg style="position:absolute;left:1115.2px;top:628.2px;width:48px;height:48px;fill:#1976d2;" viewBox="0 0 24 24"><path d="m18 7-1.41-1.41-6.34 6.34 1.41 1.41L18 7zm4.24-1.41L11.66 16.17 7.48 12l-1.41 1.41L11.66 19l12-12-1.42-1.41zM.41 13.41 6 19l1.41-1.41L1.83 12 .41 13.41z"/></svg>
<span class="t" style="left:1077.20px;top:706px;font-size:20px;color:rgba(0,0,0,0.8);letter-spacing:0.044px;-webkit-text-stroke:0.55px rgba(0,0,0,0.8);">All Caught Up</span>
<span class="t" style="left:1076.20px;top:738px;font-size:14px;color:rgba(0,0,0,0.6);letter-spacing:0.273px;">No pending actions</span>
<div style="position:absolute;left:284px;top:846px;width:1132px;height:80px;background:#fff;border-radius:8px;box-shadow:0 2px 1px -1px rgba(0,0,0,.2),0 1px 1px 0 rgba(0,0,0,.14),0 1px 3px 0 rgba(0,0,0,.12);"></div>
<svg style="position:absolute;left:301px;top:866.6px;width:24px;height:24px;fill:#333;" viewBox="0 0 24 24"><path d="M13 3c-4.97 0-9 4.03-9 9H1l3.89 3.89.07.14L9 12H6c0-3.87 3.13-7 7-7s7 3.13 7 7-3.13 7-7 7c-1.93 0-3.68-.79-4.94-2.06l-1.42 1.42C8.27 19.99 10.51 21 13 21c4.97 0 9-4.03 9-9s-4.03-9-9-9zm-1 5v5l4.28 2.54.72-1.21-3.5-2.08V8H12z"/></svg>
<span class="t" style="left:336.60px;top:870px;font-size:16px;color:rgba(0,0,0,0.87);letter-spacing:0.363px;-webkit-text-stroke:0.5px rgba(0,0,0,0.87);">Recent Activity</span>
<div style="position:absolute;left:1274px;top:864px;width:86px;height:28px;background:#fff;border-radius:4px;box-shadow:0 3px 1px -2px rgba(0,0,0,.2),0 2px 2px 0 rgba(0,0,0,.14),0 1px 5px 0 rgba(0,0,0,.12);"></div>
<span class="t" style="left:1287.60px;top:872px;font-size:12px;color:rgba(0,0,0,0.8);letter-spacing:1.689px;transform:scaleX(0.8800);-webkit-text-stroke:0.35px rgba(0,0,0,0.8);">VIEW ALL</span>
<div style="position:absolute;left:1361px;top:859px;width:39px;height:39px;background:#fff;border-radius:50%;box-shadow:0 3px 1px -2px rgba(0,0,0,.2),0 2px 2px 0 rgba(0,0,0,.14),0 1px 5px 0 rgba(0,0,0,.12);"></div>
<svg style="position:absolute;left:1371px;top:869.2px;width:18px;height:18px;fill:#333;" viewBox="0 0 24 24"><path d="M16.59 8.59 12 13.17 7.41 8.59 6 10l6 6 6-6z"/></svg>
</div>
</body></html>
